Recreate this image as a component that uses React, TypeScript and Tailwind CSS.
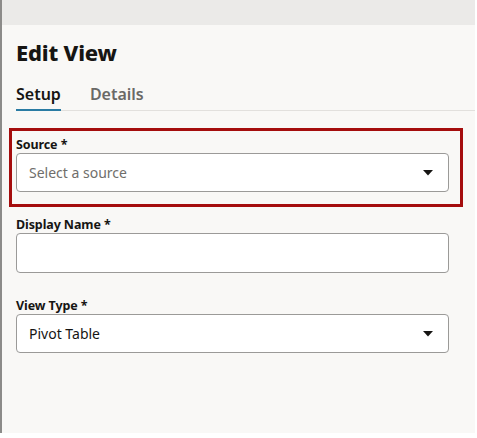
import { ReactNode } from 'react'

// Edit View drawer — setup tab with source, display name and view type fields

function Caret() {
  return (
    <svg width="10" height="6" viewBox="0 0 10 6" className="shrink-0">
      <path d="M0 0 H10 L5 5.5 Z" fill="#161513" />
    </svg>
  )
}

function FieldLabel({ children }: { children: ReactNode }) {
  return <div className="text-[12.5px] leading-4 font-bold text-[#161513] tracking-[-0.1px]">{children}</div>
}

function SelectBox({ value, placeholder }: { value?: string; placeholder?: string }) {
  return (
    <div className="h-[39px] w-[433px] flex items-center justify-between pl-3 pr-[15px] bg-white border border-[#9b9a98] rounded-[4px]">
      <span className={value ? 'text-[14px] text-[#161513]' : 'text-[14px] text-[#6f6e6b]'}>
        {value ?? placeholder}
      </span>
      <Caret />
    </div>
  )
}

export default function App() {
  return (
    <div className="w-[477px] h-[438px] bg-white" style={{ fontFamily: '"Noto Sans", "Open Sans", sans-serif' }}>
      <div className="w-[475px] h-[433px] bg-[#f9f8f6] border-l-2 border-[#8c8b89] flex flex-col">
        {/* textured header strip */}
        <div className="h-[25px] bg-[#ebeae8]" />

        <div className="pl-[14px] flex flex-col">
          <h1 className="mt-[13px] text-[22px] leading-7 font-extrabold text-[#161513] tracking-[-0.2px]">Edit View</h1>

          {/* ── Tabs ─────────────────────────────── */}
          <div className="mt-[16px] flex gap-[29px] border-b border-[#e2e0dd]">
            <div className="pb-[3px] border-b-2 border-[#2a7ba3] -mb-px text-[16px] leading-6 font-semibold text-[#161513]">
              Setup
            </div>
            <div className="pb-[3px] text-[16px] leading-6 font-semibold text-[#6a6966]">Details</div>
          </div>

          {/* highlighted source field */}
          <div className="mt-[17px] ml-[-7px] w-[454px] border-[3px] border-[#a50d0d] pl-[4px] pt-[6px] pb-[12px] flex flex-col">
            <FieldLabel>Source *</FieldLabel>
            <SelectBox placeholder="Select a source" />
          </div>

          <div className="mt-[10px] flex flex-col">
            <FieldLabel>Display Name *</FieldLabel>
            <div className="h-[40px] w-[433px] bg-white border border-[#9b9a98] rounded-[4px]" />
          </div>

          <div className="mt-[25px] flex flex-col">
            <FieldLabel>View Type *</FieldLabel>
            <SelectBox value="Pivot Table" />
          </div>
        </div>
      </div>
    </div>
  )
}
